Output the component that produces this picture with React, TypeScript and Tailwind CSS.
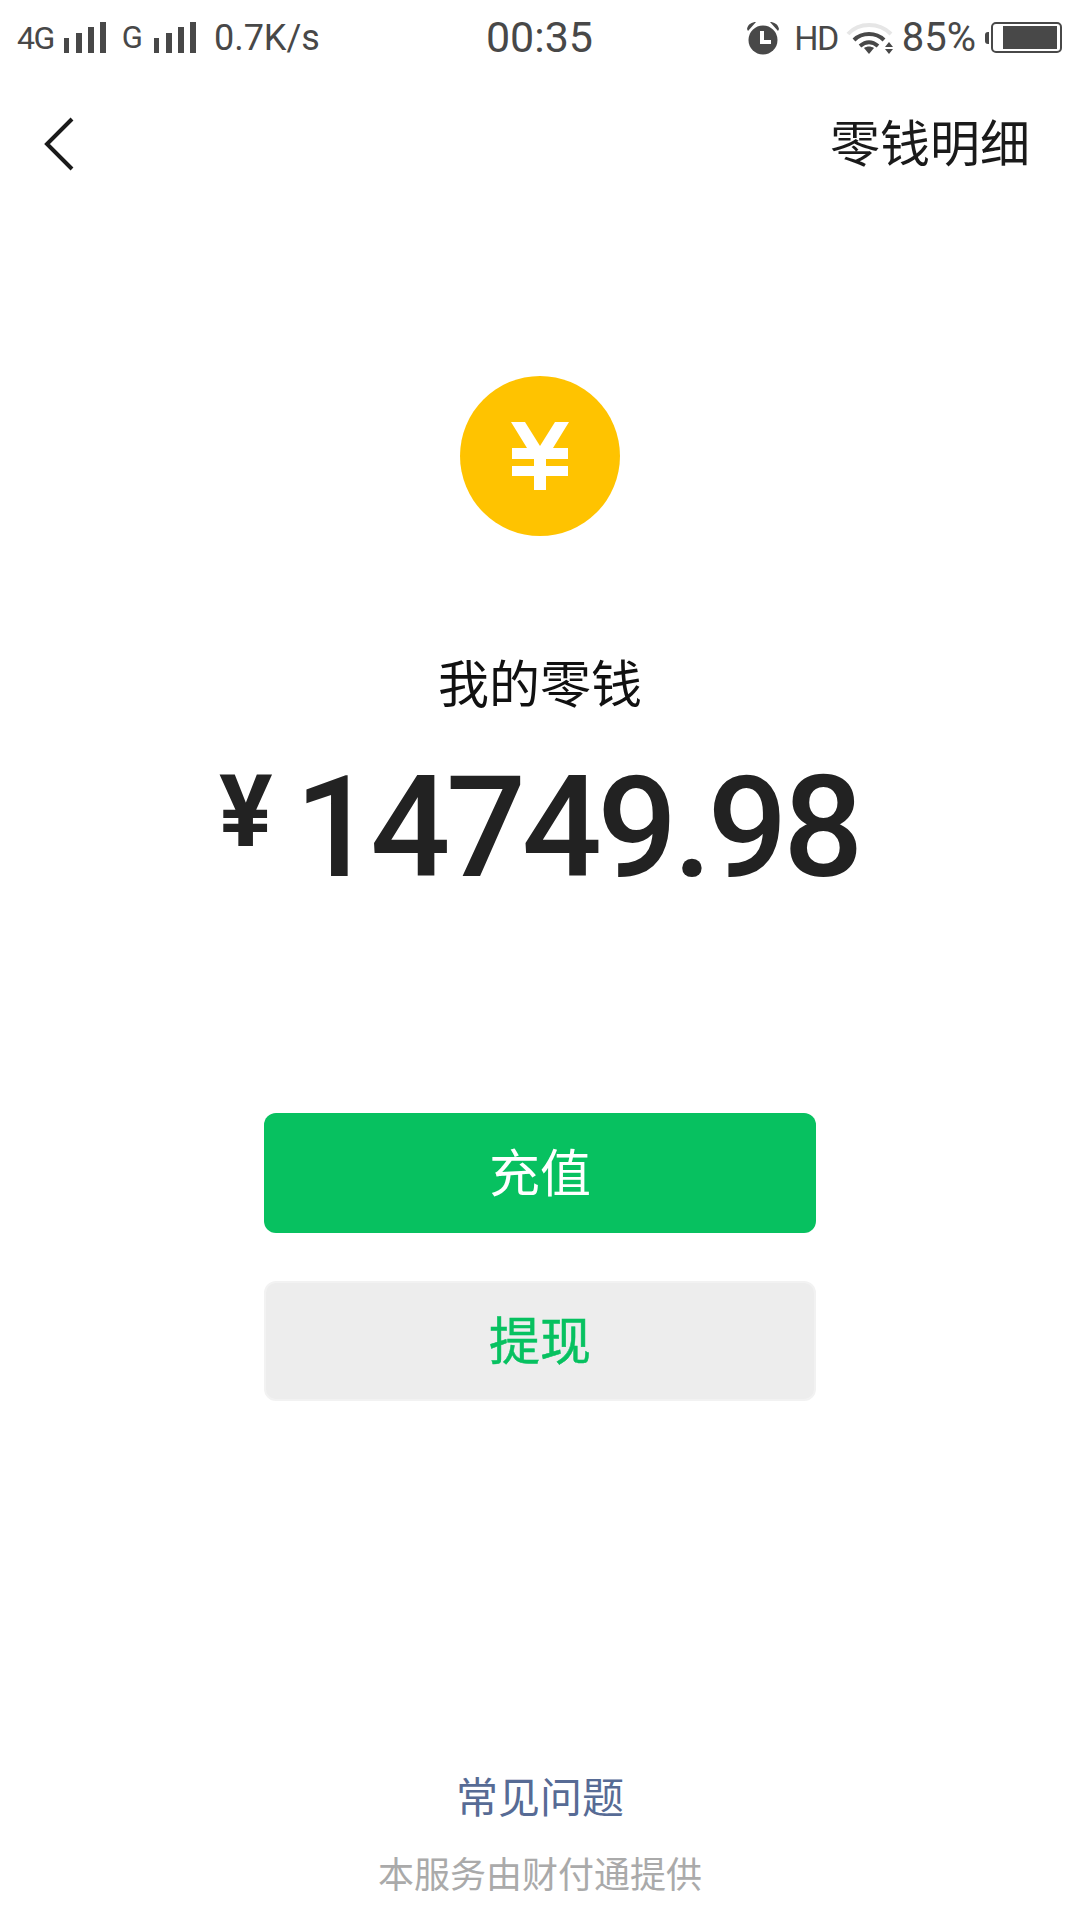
const cjk = "font-['Roboto','Noto_Sans_CJK_SC',sans-serif]";

function Bars() {
  return (
    <svg width="42" height="32" viewBox="0 0 42 32" className="block" fill="#484848">
      <rect x="0" y="16" width="5" height="15" />
      <rect x="12" y="11" width="6" height="20" />
      <rect x="24" y="5" width="6" height="26" />
      <rect x="36" y="0" width="6" height="31" />
    </svg>
  );
}

function Alarm() {
  return (
    <svg width="36" height="36" viewBox="0 0 36 36" className="block">
      <circle cx="18" cy="20" r="14.5" fill="#484848" />
      <path d="M2 9 C3 4 7 2 11 2 L3 11 Z M34 9 C33 4 29 2 25 2 L33 11 Z" fill="#484848" />
      <path d="M17 11 V22 H26" fill="none" stroke="#fff" strokeWidth="4" />
    </svg>
  );
}

function Wifi() {
  return (
    <svg width="48" height="34" viewBox="0 0 48 34" className="block" fill="none">
      <path d="M2 13 C13 1 33 1 45 13" stroke="#e6e6e6" strokeWidth="4" />
      <path d="M8 19 C16 11 30 11 38 19" stroke="#484848" strokeWidth="4" />
      <path d="M14 25 C20 20 26 20 32 25" stroke="#484848" strokeWidth="4" />
      <path d="M18 27 C21 25 25 25 28 27 L23 33 Z" fill="#484848" />
      <path d="M43 21 L47 26 H39 Z M39 28 H47 L43 33 Z" fill="#484848" />
    </svg>
  );
}

function Battery() {
  return (
    <div className="flex items-center">
      <div className="w-[4px] h-[12px] rounded-l-[3px] bg-[#484848]" />
      <div className="ml-[2px] w-[71px] h-[31px] rounded-[5px] border-2 border-[#484848] flex items-center justify-end pr-[3px]">
        <div className="w-[54px] h-[23px] bg-[#484848]" />
      </div>
    </div>
  );
}

function YuanMark() {
  return (
    <svg width="58" height="68" viewBox="0 0 58 68" className="block" fill="#fff">
      <path d="M0 0 H14 L29 24 L44 0 H58 L42 26 H57 V37 H35 V44 H57 V54 H35 V68 H23 V54 H1 V44 H23 V37 H1 V26 H16 Z" />
    </svg>
  );
}

export default function App() {
  return (
    <div className={`w-[1080px] h-[1920px] bg-white flex flex-col overflow-hidden ${cjk}`}>
      <div className="h-[72px] shrink-0 flex items-center pl-[17px] pr-[18px] text-[#484848] pt-[3px]">
        <div className="flex-1 flex items-center">
          <span className="text-[32px] leading-none tracking-[-1.5px]">4G</span>
          <div className="ml-[10px]"><Bars /></div>
          <span className="ml-[16px] text-[31px] leading-none">G</span>
          <div className="ml-[11px]"><Bars /></div>
          <span className="ml-[18px] text-[36px] leading-none">0.7K/s</span>
        </div>
        <span className="text-[43px] leading-none">00:35</span>
        <div className="flex-1 flex items-center justify-end">
          <Alarm />
          <span className="ml-[13px] text-[34px] leading-none tracking-[-1.5px]">HD</span>
          <div className="ml-[8px]"><Wifi /></div>
          <span className="ml-[8px] text-[40px] leading-none">85%</span>
          <div className="ml-[9px]"><Battery /></div>
        </div>
      </div>

      <div className="h-[144px] shrink-0 flex items-center justify-between pl-[43px] pr-[50px] pt-[2px] text-[#1a1a1a]">
        <svg width="32" height="56" viewBox="0 0 32 56" className="block -mt-[2px]" fill="none">
          <path d="M29 3 L4 28 L29 53" stroke="#1a1a1a" strokeWidth="4" />
        </svg>
        <span className="text-[50px] leading-none">零钱明细</span>
      </div>

      <div className="mt-[160px] mx-auto w-[160px] h-[160px] rounded-full bg-[#ffc300] flex items-center justify-center">
        <YuanMark />
      </div>

      <div className="mt-[120px] text-center text-[51px] leading-[60px] text-[#111]">我的零钱</div>

      <div className="mt-[42px] flex justify-center items-start text-[#222] leading-none pr-[2px]">
        <span className="text-[100px] leading-none mt-[4px] font-bold">¥</span>
        <span className="ml-[22px] text-[141px] leading-[140px] tracking-[-4.5px] font-medium">14749.98</span>
      </div>

      <div className="mt-[215px] mx-auto w-[552px] flex flex-col gap-[48px]">
        <div className="h-[120px] pt-[4px] rounded-[12px] bg-[#07c160] text-white text-[51px] flex items-center justify-center">充值</div>
        <div className="h-[120px] pt-[4px] rounded-[12px] bg-[#ededed] border-2 border-[#f2f2f2] text-[#07c160] text-[51px] [-webkit-text-stroke:0.5px_#07c160] flex items-center justify-center">提现</div>
      </div>

      <div className="mt-auto pb-[22px] flex flex-col items-center">
        <div className="text-[42px] leading-[50px] text-[#576b95]">常见问题</div>
        <div className="mt-[30px] text-[36px] leading-[44px] text-[#aaaaaa]">本服务由财付通提供</div>
      </div>
    </div>
  );
}
